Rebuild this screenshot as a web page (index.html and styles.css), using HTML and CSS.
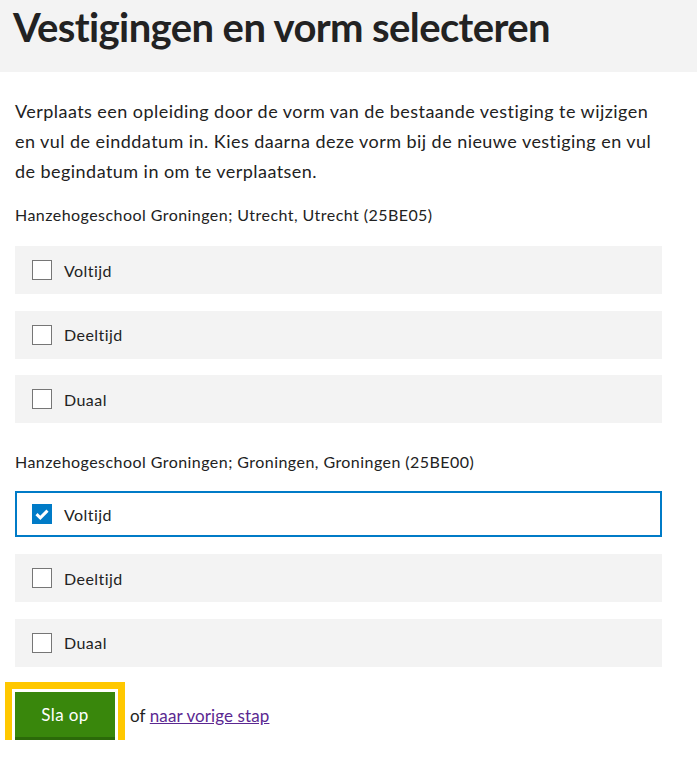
FILE: index.html
```html
<!DOCTYPE html>
<html lang="nl">
<head>
<meta charset="utf-8">
<title>Vestigingen en vorm selecteren</title>
<link rel="stylesheet" href="styles.css">
</head>
<body>
<header class="page-header">
  <h1 class="title">Vestigingen en vorm selecteren</h1>
</header>
<main class="content">
  <p class="intro">Verplaats een opleiding door de vorm van de bestaande vestiging te wijzigen en vul de einddatum in. Kies daarna deze vorm bij de nieuwe vestiging en vul de begindatum in om te verplaatsen.</p>

  <fieldset class="group group-first">
    <legend class="group-label">Hanzehogeschool Groningen; Utrecht, Utrecht (25BE05)</legend>
    <label class="option"><span class="box"></span><span class="option-text">Voltijd</span></label>
    <label class="option"><span class="box"></span><span class="option-text">Deeltijd</span></label>
    <label class="option"><span class="box"></span><span class="option-text">Duaal</span></label>
  </fieldset>

  <fieldset class="group">
    <legend class="group-label">Hanzehogeschool Groningen; Groningen, Groningen (25BE00)</legend>
    <label class="option option-checked"><span class="box box-checked"><svg viewBox="0 0 20 20" width="20" height="20"><path d="M4.5 10.2 L8.3 13.8 L15.5 6.6" fill="none" stroke="#fff" stroke-width="3"/></svg></span><span class="option-text">Voltijd</span></label>
    <label class="option"><span class="box"></span><span class="option-text">Deeltijd</span></label>
    <label class="option"><span class="box"></span><span class="option-text">Duaal</span></label>
  </fieldset>

  <div class="actions">
    <button class="btn-save" type="button">Sla op</button>
    <span class="alt">of <a href="#" class="back-link">naar vorige stap</a></span>
  </div>
</main>
</body>
</html>
```

FILE: styles.css
```css
* { box-sizing: border-box; }
body {
  margin: 0;
  font-family: Lato, "Noto Sans", sans-serif;
  color: #1f1f1f;
  background: #fff;
}
.page-header {
  background: #f3f3f3;
  height: 72px;
  padding: 0 13px;
}
.title {
  margin: 0;
  padding-top: 2px;
  font-size: 40px;
  line-height: 50px;
  font-weight: 700;
  letter-spacing: -0.6px;
  color: #222;
}
.content {
  padding: 24px 15px 0 15px;
  width: 677px;
}
.intro {
  margin: 0;
  font-size: 18px;
  line-height: 30px;
  letter-spacing: 0.45px;
  color: #222;
}
.group {
  border: 0;
  margin: 0;
  padding: 0;
  min-width: 0;
}
.group-label {
  padding: 0;
  font-size: 16px;
  line-height: 22px;
  letter-spacing: 0.45px;
  margin-top: 28px;
  margin-bottom: 18px;
  color: #222;
  float: left;
  width: 100%;
}
.group-first .group-label { margin-top: 18px; margin-bottom: 20px; }
.option {
  clear: both;
  display: flex;
  align-items: center;
  height: 48px;
  background: #f3f3f3;
  padding-left: 17px;
  margin-bottom: 16.5px;
  width: 647px;
  font-size: 16px;
  letter-spacing: 0.45px;
  color: #222;
}
.option:last-child { margin-bottom: 0; }
.option-checked {
  background: #fff;
  border: 2px solid #007bc7;
  height: 46px;
  margin-bottom: 17px;
  padding-left: 15px;
}
.box {
  width: 20px;
  height: 20px;
  border: 1px solid #767676;
  background: #fff;
  margin-right: 12px;
  flex: none;
  display: block;
}
.box-checked {
  border: 0;
  background: #007bc7;
}
.box-checked svg { display: block; }
.actions {
  display: flex;
  align-items: center;
  margin-top: 25px;
}
.btn-save {
  width: 100px;
  height: 48px;
  background: #39870c;
  border: 0;
  border-bottom: 3px solid #2b6a09;
  color: #fff;
  font-family: Lato, "Noto Sans", sans-serif;
  font-size: 17px;
  letter-spacing: 0.4px;
  padding: 0;
  outline: 7px solid #ffc800;
  outline-offset: 3px;
}
.alt {
  margin-left: 15px;
  font-size: 17px;
  letter-spacing: 0.1px;
  color: #222;
}
.back-link {
  color: #5b2891;
}
```
